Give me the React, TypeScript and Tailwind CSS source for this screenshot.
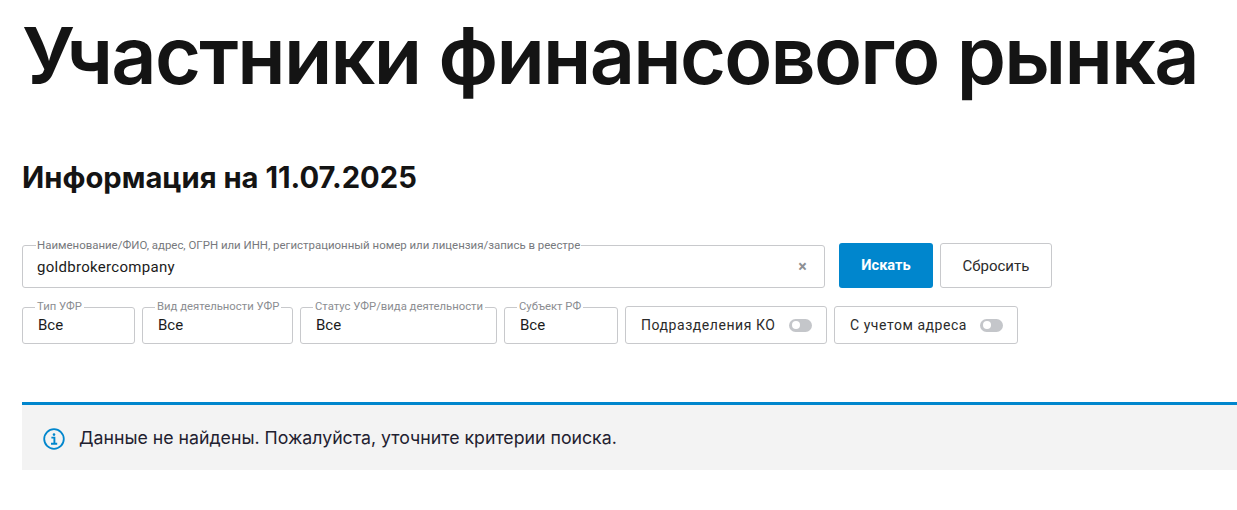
const font = { fontFamily: '"Inter", "Noto Sans", sans-serif' }

function Select({ label, width }: { label: string; width: string }) {
  return (
    <fieldset className={`${width} h-[42px] shrink-0 rounded-[3px] border border-[#c8c9cc] pl-[13px] pr-2`}>
      <legend className="-ml-[1px] h-[10px] whitespace-nowrap px-[2px] font-['Roboto'] text-[11.3px] leading-[10px] text-[#8b8d91]">{label}</legend>
      <div className="mt-[3px] pl-[2px] font-['Roboto'] text-[15px] leading-[20px] text-[#1b1b1b]">Все</div>
    </fieldset>
  )
}

function Toggle({ label, width }: { label: string; width: string }) {
  return (
    <div className={`${width} flex h-[38px] shrink-0 items-center justify-between rounded-[3px] border border-[#c8c9cc] pl-[15px] pr-[14px] font-['Roboto'] text-[14px] text-[#2b2b2b]`}>
      <span className="tracking-[0.55px]">{label}</span>
      <span className="flex h-[13px] w-[23px] items-center rounded-full bg-[#c4c6ca] pl-[3px]">
        <span className="h-[8px] w-[8px] rounded-full bg-white" />
      </span>
    </div>
  )
}

export default function App() {
  return (
    <div className="h-[510px] w-[1237px] overflow-hidden bg-white pl-[22px]" style={font}>
      <h1 className="pt-[7px] font-['Inter'] text-[79px] font-semibold leading-[96px] tracking-[-1.75px] whitespace-nowrap text-[#141414]">
        Участники финансового рынка
      </h1>
      <h2 className="mt-[52px] font-['Inter'] text-[29.2px] font-bold leading-[46px] text-[#141414]">Информация на 11.07.2025</h2>

      <div className="mt-[39px] flex items-end">
        <fieldset className="h-[48px] w-[803px] rounded-[3px] border border-[#c8c9cc] pl-[13px] pr-[17px] pt-[7px]">
          <legend className="h-[10px] whitespace-nowrap px-[1px] font-['Roboto'] text-[11.45px] leading-[10px] text-[#77797d]">
            Наименование/ФИО, адрес, ОГРН или ИНН, регистрационный номер или лицензия/запись в реестре
          </legend>
          <div className="flex items-center justify-between pl-[1px] font-['Roboto'] text-[15px] leading-[20px] tracking-[0.3px] text-[#1b1b1b]">
            <span>goldbrokercompany</span>
            <span className="text-[16px] font-bold text-[#8d8f94]">×</span>
          </div>
        </fieldset>
        <button className="ml-[14px] h-[45px] w-[94px] rounded-[3px] bg-[#0086cd] pt-[1px] font-['Roboto'] text-[14.6px] font-bold text-white">Искать</button>
        <button className="ml-[7px] h-[45px] w-[112px] rounded-[3px] border border-[#c8c9cc] pt-[1px] font-['Roboto'] text-[15px] text-[#2b2b2b]">Сбросить</button>
      </div>

      <div className="mt-[14px] flex items-end gap-[7px]">
        <Select label="Тип УФР" width="w-[113px]" />
        <Select label="Вид деятельности УФР" width="w-[151px]" />
        <Select label="Статус УФР/вида деятельности" width="w-[197px]" />
        <Select label="Субъект РФ" width="w-[114px]" />
        <Toggle label="Подразделения КО" width="w-[202px]" />
        <Toggle label="С учетом адреса" width="w-[184px]" />
      </div>

      <div className="mt-[58px] flex h-[68px] items-center border-t-[3px] border-[#0086cd] bg-[#f3f3f3] pl-[21px]">
        <svg width="22" height="22" viewBox="0 0 22 22" fill="none" stroke="#0086cd" className="mt-[3px] shrink-0">
          <circle cx="11" cy="11" r="9.8" strokeWidth="1.8" />
          <circle cx="11" cy="6.6" r="1.3" fill="#0086cd" stroke="none" />
          <path d="M8.4 9.6H11.4V15.6M8 15.8H14.2" strokeWidth="1.9" />
        </svg>
        <span className="ml-[14px] font-['Inter'] text-[17.73px] leading-[24px] text-[#1f2130]">Данные не найдены. Пожалуйста, уточните критерии поиска.</span>
      </div>
    </div>
  )
}
